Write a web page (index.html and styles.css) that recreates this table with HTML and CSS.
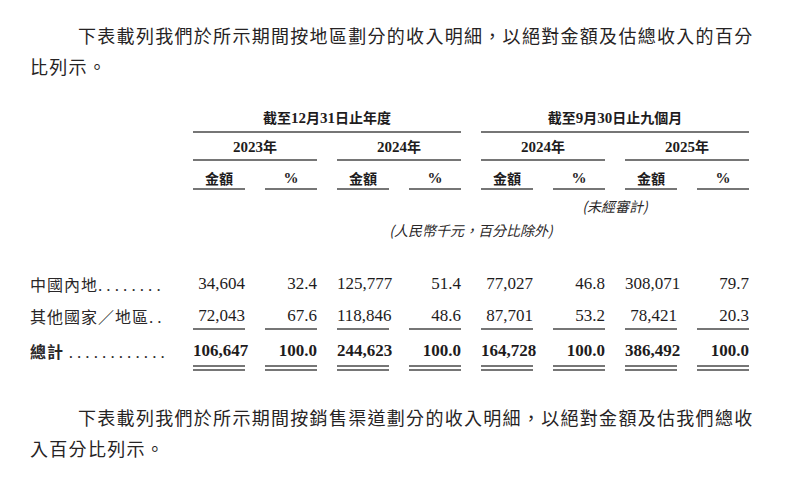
FILE: index.html
```html
<!DOCTYPE html>
<html lang="zh-Hant">
<head>
<meta charset="utf-8">
<title>收入明細</title>
<link rel="stylesheet" href="styles.css">
</head>
<body>
<div class="page">
  <p class="para para-top">下表載列我們於所示期間按地區劃分的收入明細，以絕對金額及估總收入的百分比列示。</p>

  <div class="table">
    <div class="hd group g-a">截至<span class="num">12</span>月<span class="num">31</span>日止年度</div>
    <div class="hd group g-b">截至<span class="num">9</span>月<span class="num">30</span>日止九個月</div>

    <div class="hd year y1"><span class="num">2023</span>年</div>
    <div class="hd year y2"><span class="num">2024</span>年</div>
    <div class="hd year y3"><span class="num">2024</span>年</div>
    <div class="hd year y4"><span class="num">2025</span>年</div>

    <div class="hd col c1">金額</div>
    <div class="hd col c2 num">%</div>
    <div class="hd col c3">金額</div>
    <div class="hd col c4 num">%</div>
    <div class="hd col c5">金額</div>
    <div class="hd col c6 num">%</div>
    <div class="hd col c7">金額</div>
    <div class="hd col c8 num">%</div>

    <div class="note unaudited">(未經審計)</div>
    <div class="note unit">(人民幣千元，百分比除外)</div>

    <div class="cell label r1">中國內地<span class="dots">........</span></div>
    <div class="cell val r1">34,604</div>
    <div class="cell val r1">32.4</div>
    <div class="cell val r1">125,777</div>
    <div class="cell val r1">51.4</div>
    <div class="cell val r1">77,027</div>
    <div class="cell val r1">46.8</div>
    <div class="cell val r1">308,071</div>
    <div class="cell val r1">79.7</div>

    <div class="cell label r2">其他國家／地區<span class="dots">..</span></div>
    <div class="cell val r2 ul">72,043</div>
    <div class="cell val r2 ul">67.6</div>
    <div class="cell val r2 ul">118,846</div>
    <div class="cell val r2 ul">48.6</div>
    <div class="cell val r2 ul">87,701</div>
    <div class="cell val r2 ul">53.2</div>
    <div class="cell val r2 ul">78,421</div>
    <div class="cell val r2 ul">20.3</div>

    <div class="cell label r3 total-label">總計 <span class="dots">............</span></div>
    <div class="cell val r3 dbl">106,647</div>
    <div class="cell val r3 dbl">100.0</div>
    <div class="cell val r3 dbl">244,623</div>
    <div class="cell val r3 dbl">100.0</div>
    <div class="cell val r3 dbl">164,728</div>
    <div class="cell val r3 dbl">100.0</div>
    <div class="cell val r3 dbl">386,492</div>
    <div class="cell val r3 dbl">100.0</div>
  </div>

  <p class="para para-bottom">下表載列我們於所示期間按銷售渠道劃分的收入明細，以絕對金額及估我們總收入百分比列示。</p>
</div>
</body>
</html>
```

FILE: styles.css
```css
html, body {
  margin: 0;
  padding: 0;
  background: #ffffff;
}

body {
  color: #1e1c1d;
  font-family: "Liberation Serif", "Noto Sans CJK TC", serif;
}

.page {
  width: 800px;
  height: 477px;
  overflow: hidden;
  padding-left: 30px;
  box-sizing: border-box;
}

.para {
  margin: 0;
  width: 730px;
  font-family: "Noto Sans CJK TC", sans-serif;
  font-size: 18px;
  line-height: 31px;
  letter-spacing: 1.3px;
  text-indent: 48px;
  color: #262324;
}

.para-top {
  padding-top: 20px;
}

.para-bottom {
  margin-top: 31px;
}

.num {
  font-family: "Liberation Serif", serif;
}

.table {
  margin-top: 18px;
  display: grid;
  grid-template-columns: 143px repeat(8, 52px);
  column-gap: 20px;
}

.hd {
  font-family: "Noto Sans CJK TC", sans-serif;
  font-weight: 700;
  font-size: 14px;
  line-height: 20px;
  text-align: center;
  border-bottom: 2px solid #767676;
  white-space: nowrap;
}

.hd .num,
.hd.num {
  font-family: "Liberation Serif", serif;
  font-weight: 700;
  font-size: 15px;
}

.group {
  grid-row: 1;
  padding-top: 7px;
  padding-bottom: 3px;
}
.g-a { grid-column: 2 / span 4; }
.g-b { grid-column: 6 / span 4; }

.year {
  grid-row: 2;
  padding-top: 3px;
  padding-bottom: 2px;
}
.y1 { grid-column: 2 / span 2; }
.y2 { grid-column: 4 / span 2; }
.y3 { grid-column: 6 / span 2; }
.y4 { grid-column: 8 / span 2; }

.col {
  grid-row: 3;
  padding-top: 7px;
  padding-bottom: 0;
}
.c1 { grid-column: 2; }
.c2 { grid-column: 3; }
.c3 { grid-column: 4; }
.c4 { grid-column: 5; }
.c5 { grid-column: 6; }
.c6 { grid-column: 7; }
.c7 { grid-column: 8; }
.c8 { grid-column: 9; }

.note {
  font-family: "Noto Sans CJK TC", sans-serif;
  font-style: italic;
  font-size: 14px;
  line-height: 20px;
  text-align: center;
  color: #2a2728;
  white-space: nowrap;
}

.unaudited {
  grid-row: 4;
  grid-column: 6 / span 4;
  padding-top: 6px;
}

.unit {
  grid-row: 5;
  grid-column: 2 / span 8;
  padding-top: 4px;
}

.cell {
  font-size: 17px;
  line-height: 20px;
  white-space: nowrap;
}

.label {
  grid-column: 1;
  font-family: "Noto Sans CJK TC", sans-serif;
  font-size: 16px;
  letter-spacing: 1px;
  color: #2a2728;
}

.dots {
  font-family: "Liberation Serif", serif;
  font-size: 17px;
  letter-spacing: 4.1px;
}

.total-label {
  font-weight: 700;
}
.total-label .dots {
  font-weight: 400;
}

.val {
  text-align: right;
  font-family: "Liberation Serif", serif;
}

.r1 {
  grid-row: 6;
  padding-top: 34px;
}

.r2 {
  grid-row: 7;
  padding-top: 10px;
}

.ul {
  padding-bottom: 2px;
  border-bottom: 2px solid #767676;
}

.r3 {
  grid-row: 8;
  padding-top: 11px;
}

.r3.val {
  font-weight: 700;
}

.dbl {
  padding-bottom: 4px;
  border-bottom: 6px double #767676;
}
```
